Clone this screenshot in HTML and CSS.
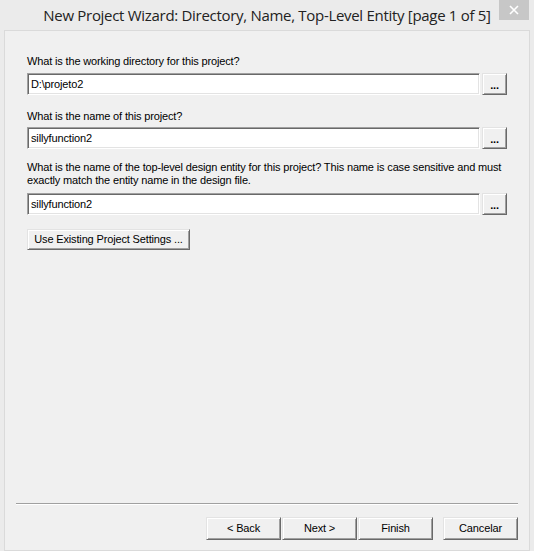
FILE: index.html
```html
<!DOCTYPE html>
<html>
<head>
<meta charset="utf-8">
<link rel="stylesheet" href="styles.css">
</head>
<body>
<div class="window">
  <div class="titlebar">
    <div class="title">New Project Wizard: Directory, Name, Top-Level Entity [page 1 of 5]</div>
    <div class="close"><svg width="10" height="10" viewBox="0 0 10 10"><path d="M1 1 L9 9 M9 1 L1 9" stroke="#fff" stroke-width="1.6"/></svg></div>
  </div>
  <div class="client">
    <div class="fields">
      <div class="field f1">
        <div class="label">What is the working directory for this project?</div>
        <div class="row">
          <div class="input">D:\projeto2</div>
          <div class="btn dots">...</div>
        </div>
      </div>
      <div class="field f2">
        <div class="label">What is the name of this project?</div>
        <div class="row">
          <div class="input">sillyfunction2</div>
          <div class="btn dots">...</div>
        </div>
      </div>
      <div class="field f3">
        <div class="label">What is the name of the top-level design entity for this project? This name is case sensitive and must exactly match the entity name in the design file.</div>
        <div class="row">
          <div class="input">sillyfunction2</div>
          <div class="btn dots">...</div>
        </div>
      </div>
      <div class="btn existing">Use Existing Project Settings ...</div>
    </div>
    <div class="footer">
      <div class="separator"></div>
      <div class="buttons">
        <div class="btn nav">&lt; Back</div>
        <div class="btn nav">Next &gt;</div>
        <div class="btn nav">Finish</div>
        <div class="btn nav cancel">Cancelar</div>
      </div>
    </div>
  </div>
</div>
</body>
</html>
```

FILE: styles.css
```css
html, body {
  margin: 0;
  padding: 0;
}
body {
  width: 534px;
  height: 551px;
  background: #ebebeb;
  overflow: hidden;
  font-family: "Liberation Sans", Arial, sans-serif;
}
.window {
  display: flex;
  flex-direction: column;
  width: 534px;
  height: 551px;
}
.titlebar {
  position: relative;
  height: 30px;
  display: flex;
  justify-content: center;
}
.title {
  font-family: "Open Sans", "Noto Sans", sans-serif;
  font-size: 15px;
  color: #222;
  line-height: 20px;
  padding-top: 5px;
  letter-spacing: -0.3px;
}
.close {
  position: absolute;
  top: 0;
  right: 5px;
  width: 30px;
  height: 20px;
  background: #c7c7c7;
  display: flex;
  align-items: center;
  justify-content: center;
}
.client {
  margin-left: 4px;
  width: 526px;
  flex: 1;
  box-sizing: border-box;
  border: 1px solid #dadada;
  background: #f0f0f0;
  display: flex;
  flex-direction: column;
  font-size: 11px;
  letter-spacing: -0.15px;
  color: #000;
}
.fields {
  flex: 1;
  padding: 24px 22px 0 22px;
  display: flex;
  flex-direction: column;
}
.label {
  line-height: 13px;
}
.row {
  display: flex;
  gap: 2px;
  margin-top: 5px;
}
.f2 { margin-top: 15px; }
.f2 .row { margin-top: 4px; }
.f3 { margin-top: 12px; }
.f3 .row { margin-top: 6px; }
.input {
  flex: 1;
  height: 22px;
  box-sizing: border-box;
  background: #fff;
  border: 1px solid;
  border-color: #a0a0a0 #ffffff #ffffff #a0a0a0;
  box-shadow: inset 1px 1px 0 #696969, inset -1px -1px 0 #e3e3e3;
  padding: 4px 3px 0 3px;
  line-height: 13px;
}
.btn {
  box-sizing: border-box;
  background: #f0f0f0;
  border: 1px solid;
  border-color: #e3e3e3 #696969 #696969 #e3e3e3;
  box-shadow: inset 1px 1px 0 #ffffff, inset -1px -1px 0 #a0a0a0;
  display: flex;
  align-items: center;
  justify-content: center;
  line-height: 13px;
  white-space: nowrap;
}
.dots {
  width: 25px;
  height: 22px;
  font-weight: bold;
  padding-top: 2px;
}
.existing {
  margin-top: 14px;
  width: 163px;
  height: 21px;
}
.footer {
  padding: 0 11px 10px 11px;
}
.separator {
  height: 1px;
  background: #a0a0a0;
  border-bottom: 1px solid #ffffff;
}
.buttons {
  margin-top: 12px;
  display: flex;
  justify-content: flex-end;
  gap: 1px;
}
.nav {
  width: 75px;
  height: 23px;
}
.cancel {
  margin-left: 9px;
}
```
